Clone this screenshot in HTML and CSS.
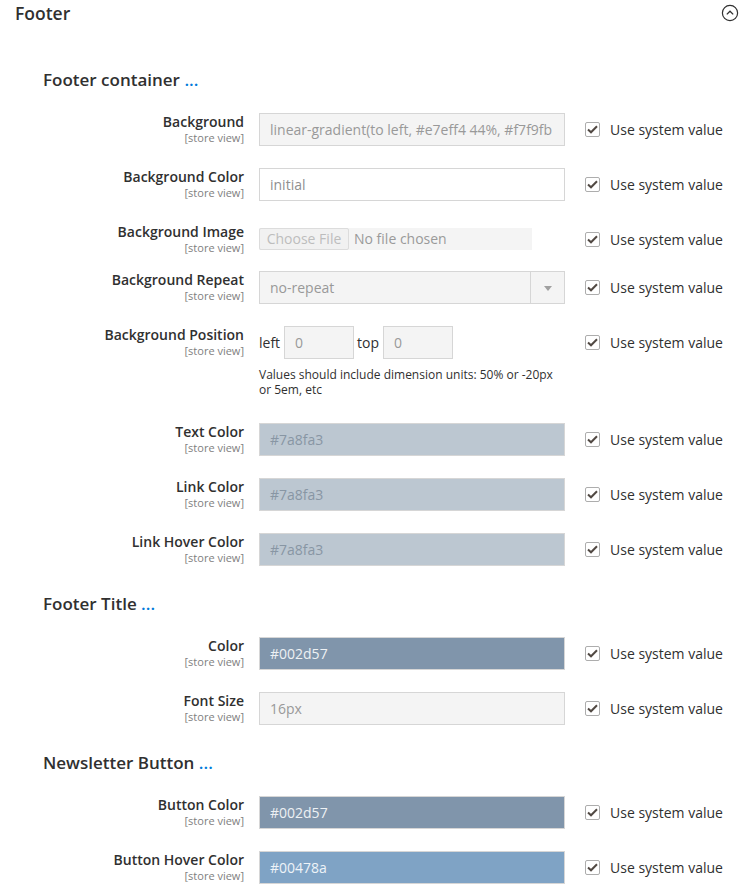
FILE: index.html
```html
<!DOCTYPE html>
<html>
<head>
<meta charset="utf-8">
<link rel="stylesheet" href="styles.css">
</head>
<body>
<div class="page">
  <div class="section-head">
    <span class="section-title">Footer</span>
    <svg class="collapse-icon" width="18" height="18" viewBox="0 0 18 18"><circle cx="9" cy="9" r="7.6" fill="none" stroke="#303030" stroke-width="1.2"/><path d="M5.8 10.4 L9 7.2 L12.2 10.4" fill="none" stroke="#303030" stroke-width="1.3"/></svg>
  </div>

  <h3 class="group-title first">Footer container <span class="dots">...</span></h3>

  <div class="row">
    <div class="label"><span class="name">Background</span><span class="scope">[store view]</span></div>
    <div class="control"><div class="input disabled">linear-gradient(to left, #e7eff4 44%, #f7f9fb</div></div>
    <div class="use-default"><span class="cb"><svg width="11" height="9" viewBox="0 0 11 9"><path d="M1 4.5 L4 7.3 L10 1.2" fill="none" stroke="#514943" stroke-width="2"/></svg></span>Use system value</div>
  </div>

  <div class="row">
    <div class="label"><span class="name">Background Color</span><span class="scope">[store view]</span></div>
    <div class="control"><div class="input disabled white">initial</div></div>
    <div class="use-default"><span class="cb"><svg width="11" height="9" viewBox="0 0 11 9"><path d="M1 4.5 L4 7.3 L10 1.2" fill="none" stroke="#514943" stroke-width="2"/></svg></span>Use system value</div>
  </div>

  <div class="row short">
    <div class="label"><span class="name">Background Image</span><span class="scope">[store view]</span></div>
    <div class="control"><div class="file"><span class="file-btn">Choose File</span><span class="file-name">No file chosen</span></div></div>
    <div class="use-default"><span class="cb"><svg width="11" height="9" viewBox="0 0 11 9"><path d="M1 4.5 L4 7.3 L10 1.2" fill="none" stroke="#514943" stroke-width="2"/></svg></span>Use system value</div>
  </div>

  <div class="row">
    <div class="label"><span class="name">Background Repeat</span><span class="scope">[store view]</span></div>
    <div class="control"><div class="select"><span class="select-value">no-repeat</span><span class="select-arrow"><span class="tri"></span></span></div></div>
    <div class="use-default"><span class="cb"><svg width="11" height="9" viewBox="0 0 11 9"><path d="M1 4.5 L4 7.3 L10 1.2" fill="none" stroke="#514943" stroke-width="2"/></svg></span>Use system value</div>
  </div>

  <div class="row">
    <div class="label"><span class="name">Background Position</span><span class="scope">[store view]</span></div>
    <div class="control">
      <div class="pos">
        <span class="pos-label">left</span><div class="input disabled small">0</div>
        <span class="pos-label">top</span><div class="input disabled small">0</div>
      </div>
      <p class="note">Values should include dimension units: 50% or -20px or 5em, etc</p>
    </div>
    <div class="use-default"><span class="cb"><svg width="11" height="9" viewBox="0 0 11 9"><path d="M1 4.5 L4 7.3 L10 1.2" fill="none" stroke="#514943" stroke-width="2"/></svg></span>Use system value</div>
  </div>

  <div class="row">
    <div class="label"><span class="name">Text Color</span><span class="scope">[store view]</span></div>
    <div class="control"><div class="input color grey">#7a8fa3</div></div>
    <div class="use-default"><span class="cb"><svg width="11" height="9" viewBox="0 0 11 9"><path d="M1 4.5 L4 7.3 L10 1.2" fill="none" stroke="#514943" stroke-width="2"/></svg></span>Use system value</div>
  </div>

  <div class="row">
    <div class="label"><span class="name">Link Color</span><span class="scope">[store view]</span></div>
    <div class="control"><div class="input color grey">#7a8fa3</div></div>
    <div class="use-default"><span class="cb"><svg width="11" height="9" viewBox="0 0 11 9"><path d="M1 4.5 L4 7.3 L10 1.2" fill="none" stroke="#514943" stroke-width="2"/></svg></span>Use system value</div>
  </div>

  <div class="row">
    <div class="label"><span class="name">Link Hover Color</span><span class="scope">[store view]</span></div>
    <div class="control"><div class="input color grey">#7a8fa3</div></div>
    <div class="use-default"><span class="cb"><svg width="11" height="9" viewBox="0 0 11 9"><path d="M1 4.5 L4 7.3 L10 1.2" fill="none" stroke="#514943" stroke-width="2"/></svg></span>Use system value</div>
  </div>

  <h3 class="group-title">Footer Title <span class="dots">...</span></h3>

  <div class="row">
    <div class="label"><span class="name">Color</span><span class="scope">[store view]</span></div>
    <div class="control"><div class="input color navy">#002d57</div></div>
    <div class="use-default"><span class="cb"><svg width="11" height="9" viewBox="0 0 11 9"><path d="M1 4.5 L4 7.3 L10 1.2" fill="none" stroke="#514943" stroke-width="2"/></svg></span>Use system value</div>
  </div>

  <div class="row">
    <div class="label"><span class="name">Font Size</span><span class="scope">[store view]</span></div>
    <div class="control"><div class="input disabled">16px</div></div>
    <div class="use-default"><span class="cb"><svg width="11" height="9" viewBox="0 0 11 9"><path d="M1 4.5 L4 7.3 L10 1.2" fill="none" stroke="#514943" stroke-width="2"/></svg></span>Use system value</div>
  </div>

  <h3 class="group-title">Newsletter Button <span class="dots">...</span></h3>

  <div class="row">
    <div class="label"><span class="name">Button Color</span><span class="scope">[store view]</span></div>
    <div class="control"><div class="input color navy">#002d57</div></div>
    <div class="use-default"><span class="cb"><svg width="11" height="9" viewBox="0 0 11 9"><path d="M1 4.5 L4 7.3 L10 1.2" fill="none" stroke="#514943" stroke-width="2"/></svg></span>Use system value</div>
  </div>

  <div class="row">
    <div class="label"><span class="name">Button Hover Color</span><span class="scope">[store view]</span></div>
    <div class="control"><div class="input color blue">#00478a</div></div>
    <div class="use-default"><span class="cb"><svg width="11" height="9" viewBox="0 0 11 9"><path d="M1 4.5 L4 7.3 L10 1.2" fill="none" stroke="#514943" stroke-width="2"/></svg></span>Use system value</div>
  </div>
</div>
</body>
</html>
```

FILE: styles.css
```css
* { box-sizing: border-box; }
html, body { margin: 0; padding: 0; background: #fff; }
body {
  font-family: "Open Sans", "DejaVu Sans", sans-serif;
  color: #303030;
  font-size: 14px;
  overflow: hidden;
}
.page { width: 753px; }

.section-head {
  display: flex;
  align-items: center;
  justify-content: space-between;
  height: 26px;
  padding: 0 14px 0 15px;
}
.section-title {
  font-size: 17.5px;
  font-weight: 600;
  line-height: 26px;
  color: #303030;
}
.collapse-icon { display: block; }

.group-title {
  margin: 26px 0 21px 43px;
  font-size: 17px;
  font-weight: 600;
  line-height: 24px;
  color: #303030;
}
.group-title.first { margin-top: 42px; }
.dots { color: #007bdb; font-weight: 600; }

.row {
  display: grid;
  grid-template-columns: 244px 306px 1fr;
  column-gap: 15px;
  margin-bottom: 22px;
  align-items: start;
}
.row.short { margin-bottom: 16px; }
.label {
  display: flex;
  flex-direction: column;
  align-items: flex-end;
  text-align: right;
}
.name {
  font-weight: 600;
  font-size: 14px;
  line-height: 18px;
  color: #303030;
}
.scope {
  font-size: 11px;
  line-height: 14px;
  color: #808080;
}

.input {
  height: 33px;
  border: 1px solid #d6d6d6;
  padding: 0 10px;
  line-height: 31px;
  font-size: 14px;
  white-space: nowrap;
  overflow: hidden;
}
.input.disabled { background: #f4f4f4; color: #999; }
.input.disabled.white { background: #fff; color: #8f8f8f; }
.input.small { width: 70px; }
.input.grey { background: #bcc7d1; color: #8896a4; }
.input.navy { background: #8095ab; color: #eef1f4; }
.input.blue { background: #7fa3c5; color: #eef3f8; }

.file {
  margin-top: 5px;
  width: 273px;
  height: 22px;
  background: #f4f4f4;
  display: flex;
  align-items: center;
  font-size: 14px;
}
.file-btn {
  height: 22px;
  width: 90px;
  border: 1px solid #dcdcdc;
  border-radius: 2px;
  background: #f1f1f1;
  color: #bdbdbd;
  line-height: 20px;
  text-align: center;
}
.file-name { color: #9a9a9a; margin-left: 5px; line-height: 22px; }

.select {
  height: 33px;
  border: 1px solid #d6d6d6;
  background: #f4f4f4;
  display: flex;
}
.select-value {
  flex: 1;
  padding-left: 10px;
  line-height: 31px;
  color: #999;
}
.select-arrow {
  width: 34px;
  border-left: 1px solid #d6d6d6;
  display: flex;
  align-items: center;
  justify-content: center;
}
.tri {
  width: 0; height: 0;
  border-left: 4px solid transparent;
  border-right: 4px solid transparent;
  border-top: 5px solid #a0a0a0;
  margin-top: 1px;
}

.pos { display: flex; align-items: center; }
.pos-label { font-size: 14px; color: #303030; margin-right: 4px; }
.pos .input.small + .pos-label { margin-left: 3px; }
.note {
  margin: 8px 0 4px 0;
  font-size: 12px;
  line-height: 15px;
  color: #303030;
}

.use-default {
  display: flex;
  align-items: center;
  padding-left: 5px;
  margin-top: 8px;
  font-size: 14px;
  line-height: 17px;
  color: #303030;
  white-space: nowrap;
}
.cb {
  width: 15px;
  height: 15px;
  border: 1px solid #adadad;
  border-radius: 2px;
  background: #fff;
  display: flex;
  align-items: center;
  justify-content: center;
  margin-right: 10px;
}
.cb svg { display: block; }
```
